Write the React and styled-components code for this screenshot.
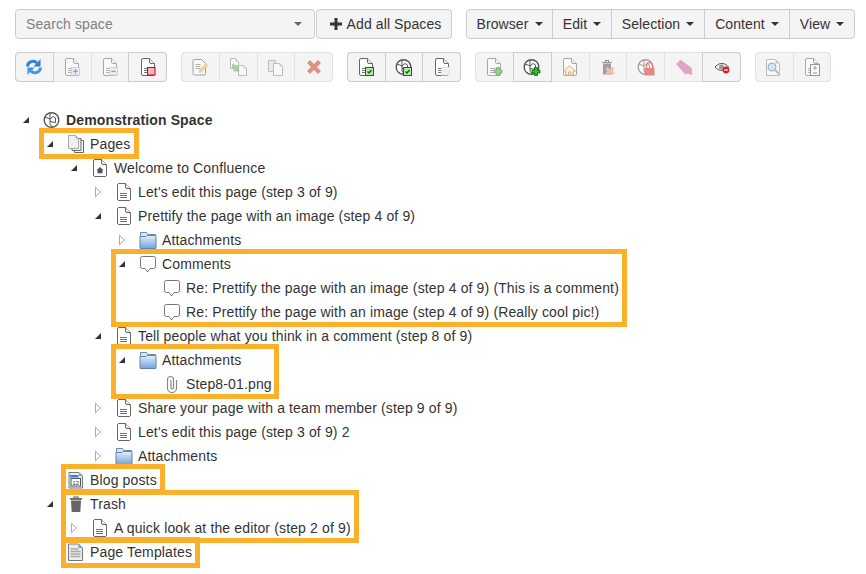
import React from 'react';
import styled, {createGlobalStyle, css} from 'styled-components';

const GlobalStyle = createGlobalStyle`
  html, body {
    margin: 0;
    background: #fff;
    font-family: "Liberation Sans", Arial, sans-serif;
    font-size: 14px;
    color: #333;
  }
`;

const Page = styled.div`
  width: 866px;
  height: 574px;
  padding: 9px 0 0 15px;
  box-sizing: border-box;
  overflow: hidden;
`;

const TopBar = styled.div`
  display: flex;
  align-items: stretch;
  height: 30px;
  letter-spacing: .1px;
`;

const SearchSelect = styled.div`
  width: 300px;
  display: flex;
  align-items: center;
  justify-content: space-between;
  box-sizing: border-box;
  padding: 0 12px 0 10px;
  background: #f4f4f4;
  border: 1px solid #ccc;
  border-radius: 4px;
  color: #7f7f7f;
`;

const AddButton = styled.div`
  width: 136px;
  margin-left: 1px;
  padding-left: 3px;
  display: flex;
  align-items: center;
  justify-content: center;
  gap: 5px;
  box-sizing: border-box;
  background: #f4f4f4;
  border: 1px solid #ccc;
  border-radius: 4px;
`;

const MenuGroup = styled.div`
  display: flex;
  margin-left: 14px;
  background: #f4f4f4;
  border: 1px solid #ccc;
  border-radius: 4px;
`;

const MenuButton = styled.div`
  width: ${p => p.$width}px;
  display: flex;
  align-items: center;
  justify-content: center;
  gap: 6px;
  box-sizing: border-box;
  & + & {
    border-left: 1px solid #ccc;
  }
`;

const Caret = styled.span`
  display: inline-block;
  width: 0;
  height: 0;
  border-top: 4px solid ${p => p.$color || '#333'};
  border-left: 4px solid transparent;
  border-right: 4px solid transparent;
`;

const ToolBar = styled.div`
  display: flex;
  gap: 14px;
  margin-top: 13px;
  height: 30px;
`;

const ToolGroup = styled.div`
  display: flex;
  width: ${p => p.$count * 38}px;
  box-sizing: border-box;
  background: #f4f4f4;
  border: 1px solid #e2e2e2;
  border-radius: 4px;
`;

const ToolButton = styled.div`
  flex: 1;
  margin: -1px 0 -1px -1px;
  display: flex;
  align-items: center;
  justify-content: center;
  border: 1px solid #e2e2e2;
  &:first-child {
    border-radius: 4px 0 0 4px;
  }
  &:last-child {
    margin-right: -1px;
    border-radius: 0 4px 4px 0;
  }
  ${p => p.$on && css`
    border-color: #ccc;
    z-index: 1;
  `}
  svg {
    opacity: ${p => (p.$on ? 1 : 0.52)};
  }
`;

const Tree = styled.div`
  margin: 26px 0 0 3px;
  letter-spacing: .14px;
`;

const Branch = styled.div`
  padding-left: 24px;
`;

const Row = styled.div`
  display: flex;
  align-items: center;
  height: 24px;
  width: max-content;
  font-weight: ${p => (p.$bold ? 700 : 400)};
`;

const Toggle = styled.svg`
  width: 16px;
  height: 24px;
  flex: none;
`;

const RowIcon = styled.svg`
  width: 18px;
  height: 18px;
  margin: 0 5px 0 9px;
  flex: none;
`;

const Glyph = styled.svg`
  width: 18px;
  height: 18px;
  display: block;
`;

const Frame = styled.div`
  position: relative;
  width: max-content;
  &::after {
    content: '';
    position: absolute;
    inset: ${p => p.$inset};
    border: 5px solid #fbb02c;
    pointer-events: none;
  }
`;

const Lines = ({x = 5, w = 7, y = 10, stroke = '#777'}) => (
  <path d={`M${x} ${y}.5h${w}M${x} ${y + 2}.5h${w}M${x} ${y + 4}.5h${w}`} stroke={stroke} fill="none" />
);

const Sheet = ({stroke = '#666', lines = true}) => (
  <>
    <path
      d="M4 .5h6.500l5 5v10.500a1.500 1.500 0 0 1-1.500 1.500H4a1.500 1.500 0 0 1-1.500-1.500V2A1.500 1.500 0 0 1 4 .5z"
      fill="#fff"
      stroke={stroke}
    />
    <path d="M10.500 .5v3.500a1.500 1.500 0 0 0 1.500 1.500h3.500" fill="#f0f0f0" stroke={stroke} />
    {lines && <Lines />}
  </>
);

const Disc = () => (
  <>
    <circle cx="8.500" cy="9" r="7.300" fill="#fff" stroke="#555" strokeWidth="1.400" />
    <path d="M2 6l5 2v5.500l3 2.500M7 2v6l3-2.500 2.500 1.500v4.500l-5.500-1" fill="none" stroke="#555" />
  </>
);

const CheckBadge = () => (
  <>
    <rect x="8.500" y="9.500" width="8" height="8" fill="#b9e6b0" stroke="#0a6e0a" />
    <path d="M10.500 13.500l1.500 1.500 2.500-3" fill="none" stroke="#0a6e0a" strokeWidth="1.400" />
  </>
);

const GreenPlus = () => (
  <path
    d="M11.500 9.500h3v2.500h2.500v3H14.500v2.500h-3V15H9v-3h2.500z"
    fill="#2cc02c"
    stroke="#0a5a0a"
    strokeWidth=".8"
  />
);

const TinyDoc = ({x, y, fill = '#fff'}) => (
  <g transform={`translate(${x} ${y})`}>
    <path d="M.5.5h5l3 3v7h-8z" fill={fill} stroke="#888" />
    <path d="M5.500.5v3h3z" fill="#6fb4e8" />
  </g>
);

const toolIcons = {
  refresh: (
    <>
      <path d="M2.500 8.500a5.500 5.500 0 0 1 9.500-3.500" fill="none" stroke="#2f7fdc" strokeWidth="3" />
      <path d="M15.500 1v7.500H8.500z" fill="#2f7fdc" />
      <path d="M15.500 9.500a5.500 5.500 0 0 1-9.500 3.500" fill="none" stroke="#3f95e8" strokeWidth="3" />
      <path d="M2.500 17V9.500h7z" fill="#3f95e8" />
    </>
  ),
  docPlus: (
    <>
      <Sheet />
      <rect x="8.500" y="9.500" width="8" height="7.500" fill="#dbe8f4" stroke="#9db6cc" />
      <path d="M12.500 11v4.500M10.300 13.300h4.500" stroke="#333" />
    </>
  ),
  docMinus: (
    <>
      <Sheet />
      <rect x="8.500" y="9.500" width="8" height="7.500" fill="#dbe8f4" stroke="#9db6cc" />
      <path d="M10.300 13.300h4.500" stroke="#333" />
    </>
  ),
  docRed: (
    <>
      <Sheet />
      <rect x="8.500" y="9.500" width="7.500" height="7.500" fill="#ffb3ba" stroke="#d00000" />
    </>
  ),
  docEdit: (
    <>
      <path d="M3.500 1.500h7l4 4v10a1.500 1.500 0 0 1-1.500 1.500H3.500A1.500 1.500 0 0 1 2 15.500V3a1.500 1.500 0 0 1 1.500-1.500z" fill="#fff" stroke="#555" />
      <Lines x={4.500} w={5} y={6} />
      <path d="M8 14.500l1-3 6-6 2 2-6 6z" fill="#f0c040" stroke="#b8862a" strokeWidth=".6" />
    </>
  ),
  docMove: (
    <>
      <TinyDoc x={1} y={0} />
      <TinyDoc x={9} y={7} />
      <path d="M4 6l3 2 1-1 2 6H4.500l1.500-1.500L3 9z" fill="#55c04a" stroke="#2a7a2a" strokeWidth=".6" />
    </>
  ),
  docCopy: (
    <>
      <path d="M1.500 2.500h7v11h-7z" fill="#e4e4e4" stroke="#888" />
      <path d="M6.500 5.500h6l3 3v9h-9z" fill="#fff" stroke="#888" />
      <path d="M12.500 5.500v3h3z" fill="#6fb4e8" />
    </>
  ),
  cross: (
    <path d="M2 5l3-3 4 4 4-4 3 3-4 4 4 4-3 3-4-4-4 4-3-3 4-4z" fill="#c8391f" />
  ),
  docCheck: (
    <>
      <Sheet />
      <CheckBadge />
    </>
  ),
  spaceCheck: (
    <>
      <Disc />
      <CheckBadge />
    </>
  ),
  docBlank: (
    <>
      <Sheet />
      <rect x="8.500" y="9.500" width="8" height="7.500" fill="#eaf1f7" stroke="#dbe4ec" />
    </>
  ),
  docAdd: (
    <>
      <Sheet />
      <GreenPlus />
    </>
  ),
  spaceAdd: (
    <>
      <Disc />
      <GreenPlus />
    </>
  ),
  docHome: (
    <>
      <Sheet lines={false} />
      <path d="M8.500 7.500L2.500 13h2v4h8v-4h2z" fill="#f8e7c8" stroke="#c47a2a" />
      <path d="M7.500 17v-3h2.500v3" fill="none" stroke="#c47a2a" />
    </>
  ),
  trashX: (
    <>
      <path d="M3 4.500h10M6.500 4V2.500h3V4" stroke="#444" strokeWidth="1.200" fill="none" />
      <path d="M4 5.500h8v11H4z" fill="#555" />
      <path d="M8.500 9l2.500 2 2.500-2 2 2-2 2 2 2-2 2-2.500-2-2.500 2-2-2 2-2-2-2z" fill="#f08a80" />
    </>
  ),
  spaceLock: (
    <>
      <Disc />
      <path d="M9.500 10V7.500a3 3 0 0 1 6 0V10" fill="none" stroke="#c22" strokeWidth="1.400" />
      <rect x="7.500" y="10" width="10" height="7.500" fill="#d22" />
    </>
  ),
  tag: (
    <path d="M1.500 6l4-4 11 8 .5 6.500-4-1-3 .5z" fill="#c9609a" stroke="#b85a8a" strokeWidth=".5" />
  ),
  eyeMinus: (
    <>
      <path d="M2 9c2-2.500 4.500-3.500 7-3.500s4.500 1 6.500 3.500c-2 2.500-4.500 3.500-6.500 3.500S4 11.500 2 9z" fill="#eee" stroke="#555" />
      <circle cx="8.500" cy="9" r="2.500" fill="#999" />
      <circle cx="13" cy="12" r="3.400" fill="#d9202a" />
      <path d="M11.200 12h3.600" stroke="#fff" strokeWidth="1.300" />
    </>
  ),
  docSearch: (
    <>
      <path d="M1.500 1.500h9l4 4v12h-13z" fill="#fff" stroke="#888" />
      <path d="M10.500 1.500v4h4z" fill="#6fb4e8" />
      <circle cx="7" cy="9" r="3.800" fill="#bcd9f2" stroke="#4f7fb0" strokeWidth="1.300" />
      <path d="M10 12l4 4" stroke="#a77" strokeWidth="2" />
    </>
  ),
  docDiff: (
    <>
      <Sheet />
      <rect x="7.500" y="6.500" width="9" height="11" fill="#fff" stroke="#444" />
      <path d="M12 8v4M10 10h4" stroke="#1a9a1a" strokeWidth="1.200" />
      <path d="M10 15h4" stroke="#d22" strokeWidth="1.200" />
    </>
  ),
};

const rowIcons = {
  space: <Disc />,
  pages: (
    <>
      <path d="M7.500 5.500h9v12h-9z" fill="#fff" stroke="#666" />
      <path d="M5 3.500h9v12H5z" fill="#f4f4f4" stroke="#666" />
      <path d="M1.500 .5h7l3 3v10h-10z" fill="#f0f0f0" stroke="#aaa" />
      <path d="M8.500 .5v3h3z" fill="#6fb4e8" />
    </>
  ),
  doc: <Sheet />,
  home: (
    <>
      <Sheet lines={false} />
      <path d="M9 8L5.500 11.200h1v3h5v-3h1z" fill="#555" />
    </>
  ),
  folder: (
    <>
      <defs>
        <linearGradient id="folderBody" x1="0" y1="0" x2="0" y2="1">
          <stop offset="0" stopColor="#e6f0fa" />
          <stop offset="1" stopColor="#6ea3dc" />
        </linearGradient>
      </defs>
      <path d="M1.500 1.500h6l1.500 2h7.500v4h-15z" fill="#dfe6ec" stroke="#6b8cae" />
      <path d="M1 5.500l6 0 1-1h9v13H1z" fill="url(#folderBody)" stroke="#5e86ad" />
    </>
  ),
  comment: (
    <path
      d="M3.500 1.500h11a2 2 0 0 1 2 2v8a2 2 0 0 1-2 2h-3.500L8.500 17 6 13.500H3.500a2 2 0 0 1-2-2v-8a2 2 0 0 1 2-2z"
      fill="#fff"
      stroke="#777"
    />
  ),
  clip: (
    <path
      d="M13.500 5v8a4.500 4.500 0 0 1-9 0V4.500a3 3 0 0 1 6 0V12.500a1.300 1.300 0 0 1-2.600 0V5"
      fill="none"
      stroke="#888"
      strokeWidth="1.200"
    />
  ),
  blog: (
    <>
      <path d="M2 1.500h10l3.500 3.500v12H2z" fill="#eee" stroke="#777" />
      <path d="M12 1.500V5h3.500z" fill="#5aa6e6" />
      <path d="M3 4h8.500v2.500H3z" fill="#3f7fc4" />
      <rect x="4" y="7.500" width="9.500" height="7.500" fill="#fff" stroke="#555" />
      <text x="5.200" y="13.800" fontSize="6" fontFamily="Liberation Sans, sans-serif" fill="#333">12</text>
    </>
  ),
  trash: (
    <>
      <path d="M3 4h12" stroke="#555" strokeWidth="1.600" />
      <path d="M7 3.500V2h4v1.500" fill="none" stroke="#555" strokeWidth="1.200" />
      <path d="M4 5.500h10l-.7 11.500H4.700z" fill="#666" />
    </>
  ),
  template: (
    <>
      <path d="M1.500 1h10l4 4v12.500h-14z" fill="#ececec" stroke="#777" />
      <path d="M11.500 1v4h4z" fill="#5aa6e6" />
      <path d="M3.500 6h8M3.500 8.500h10M3.500 11h10M3.500 13.500h10" stroke="#aaa" strokeWidth="1.300" />
    </>
  ),
};

const Node = ({icon, open, closed, bold, children}) => (
  <Row $bold={bold}>
    <Toggle viewBox="0 0 16 24">
      {open && <path d="M11 9v6H5z" fill="#333" />}
      {closed && <path d="M5.500 7.500l5 4.500-5 4.500z" fill="#fff" stroke="#aaa" />}
    </Toggle>
    <RowIcon viewBox="0 0 18 18">{rowIcons[icon]}</RowIcon>
    {children}
  </Row>
);

const toolGroups = [
  [['refresh', 1], ['docPlus'], ['docMinus'], ['docRed', 1]],
  [['docEdit'], ['docMove'], ['docCopy'], ['cross']],
  [['docCheck', 1], ['spaceCheck', 1], ['docBlank', 1]],
  [['docAdd'], ['spaceAdd', 1], ['docHome'], ['trashX'], ['spaceLock'], ['tag'], ['eyeMinus', 1]],
  [['docSearch'], ['docDiff']],
];

const menus = [
  ['Browser', 85],
  ['Edit', 59],
  ['Selection', 93],
  ['Content', 85],
  ['View', 65],
];

const App = () => (
  <Page>
    <GlobalStyle />
    <TopBar>
      <SearchSelect>
        Search space
        <Caret $color="#666" />
      </SearchSelect>
      <AddButton>
        <svg width="12" height="12" viewBox="0 0 12 12">
          <path d="M4.500 0h3v4.500H12v3H7.500V12h-3V7.500H0v-3h4.500z" fill="#333" />
        </svg>
        Add all Spaces
      </AddButton>
      <MenuGroup>
        {menus.map(([label, width]) => (
          <MenuButton key={label} $width={width}>
            {label}
            <Caret />
          </MenuButton>
        ))}
      </MenuGroup>
    </TopBar>

    <ToolBar>
      {toolGroups.map((group, i) => (
        <ToolGroup key={i} $count={group.length}>
          {group.map(([name, on]) => (
            <ToolButton key={name} $on={on}>
              <Glyph viewBox="0 0 18 18">{toolIcons[name]}</Glyph>
            </ToolButton>
          ))}
        </ToolGroup>
      ))}
    </ToolBar>

    <Tree>
      <Node icon="space" open bold>Demonstration Space</Node>
      <Branch>
        <Frame $inset="-4px -9px -3px -3px">
          <Node icon="pages" open>Pages</Node>
        </Frame>
        <Branch>
          <Node icon="home" open>Welcome to Confluence</Node>
          <Branch>
            <Node icon="doc" closed>Let's edit this page (step 3 of 9)</Node>
            <Node icon="doc" open>Prettify the page with an image (step 4 of 9)</Node>
            <Branch>
              <Node icon="folder" closed>Attachments</Node>
              <Frame $inset="-3px -8px -3px -3px">
                <Node icon="comment" open>Comments</Node>
                <Branch>
                  <Node icon="comment">Re: Prettify the page with an image (step 4 of 9) (This is a comment)</Node>
                  <Node icon="comment">Re: Prettify the page with an image (step 4 of 9) (Really cool pic!)</Node>
                </Branch>
              </Frame>
            </Branch>
            <Node icon="doc" open>Tell people what you think in a comment (step 8 of 9)</Node>
            <Branch>
              <Frame $inset="-4px -7px -3px -3px">
                <Node icon="folder" open>Attachments</Node>
                <Branch>
                  <Node icon="clip">Step8-01.png</Node>
                </Branch>
              </Frame>
            </Branch>
            <Node icon="doc" closed>Share your page with a team member (step 9 of 9)</Node>
            <Node icon="doc" closed>Let's edit this page (step 3 of 9) 2</Node>
            <Node icon="folder" closed>Attachments</Node>
          </Branch>
        </Branch>
        <Frame $inset="-4px -8px -2px 19px">
          <Node icon="blog">Blog posts</Node>
        </Frame>
        <Frame $inset="-2px -8px -3px 19px">
          <Node icon="trash" open>Trash</Node>
          <Branch>
            <Node icon="doc" closed>A quick look at the editor (step 2 of 9)</Node>
          </Branch>
        </Frame>
        <Frame $inset="-3px -8px -4px 19px">
          <Node icon="template">Page Templates</Node>
        </Frame>
      </Branch>
    </Tree>
  </Page>
);

export default App;
